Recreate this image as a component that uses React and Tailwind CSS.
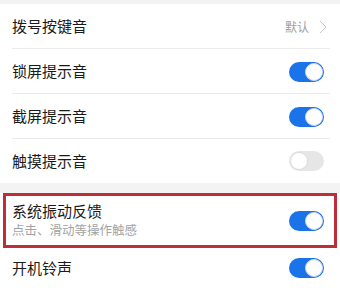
import React from "react";

const font = { fontFamily: '"Noto Sans CJK SC", "Noto Sans", sans-serif' };

function Toggle({ on }) {
  return on ? (
    <div className="w-[35px] h-[20px] rounded-full bg-[#1a73e8] flex items-center justify-end pr-[1px]">
      <div className="w-[18px] h-[18px] rounded-full bg-white border border-[#d0d8e4]" />
    </div>
  ) : (
    <div className="w-[35px] h-[20px] rounded-full bg-[#e6e6e6] flex items-center justify-start pl-[1px]">
      <div className="w-[18px] h-[18px] rounded-full bg-white border border-[#dcdcdc]" />
    </div>
  );
}

function Row({ label, right, divider, h = "h-[45px]" }) {
  return (
    <div className={`${h} flex items-center pl-3 pr-[16px] relative`}>
      <span className="flex-1 text-[15px] text-[#1a1a1a]">{label}</span>
      {right}
      {divider && <div className="absolute left-3 right-[10px] bottom-0 h-px bg-[#ebebeb]" />}
    </div>
  );
}

export default function App() {
  return (
    <div className="w-[340px] h-[291px] bg-white overflow-hidden" style={font}>
      <div className="h-[4px] bg-[#f3f3f3]" />
      <Row
        label="拨号按键音"
        divider
        right={
          <div className="flex items-center gap-[10px] mr-[-3px]">
            <span className="text-[12px] text-[#a0a0a0]">默认</span>
            <svg width="8" height="14" viewBox="0 0 8 14" className="mt-[1px]">
              <path d="M1 1 L7 7 L1 13" fill="none" stroke="#c4c4c4" strokeWidth="1" />
            </svg>
          </div>
        }
      />
      <Row label="锁屏提示音" divider right={<Toggle on />} />
      <Row label="截屏提示音" divider right={<Toggle on />} />
      <Row label="触摸提示音" h="h-[44px]" right={<Toggle on={false} />} />
      <div className="h-[10px] bg-[#f3f3f3]" />
      <div className="mx-[3px] h-[55px] border-[3px] border-[#bd2e38] flex items-center pl-[6px] pr-[10px]">
        <div className="flex-1 flex flex-col">
          <span className="text-[15px] leading-[18px] text-[#1a1a1a]">系统振动反馈</span>
          <span className="text-[12.5px] leading-[18px] text-[#a3a3a3] mt-[1px]">点击、滑动等操作触感</span>
        </div>
        <Toggle on />
      </div>
      <Row label="开机铃声" h="h-[40px]" right={<Toggle on />} />
    </div>
  );
}
